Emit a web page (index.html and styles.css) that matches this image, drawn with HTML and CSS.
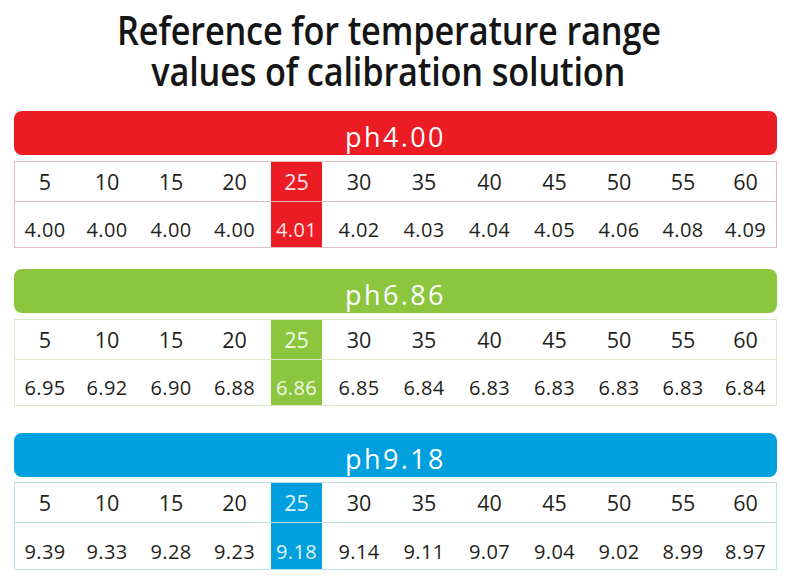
FILE: index.html
```html
<!DOCTYPE html>
<html>
<head>
<meta charset="utf-8">
<link rel="stylesheet" href="styles.css">
</head>
<body>
<div class="page">
  <h1 class="title"><span class="tl">Reference for temperature range</span><span class="tl">values of calibration solution</span></h1>

  <section class="sec red">
    <div class="bar">ph4.00</div>
    <div class="grid">
      <div class="c t">5</div><div class="c t">10</div><div class="c t">15</div><div class="c t">20</div><div class="c t hl"><span class="box">25</span></div><div class="c t">30</div><div class="c t">35</div><div class="c t">40</div><div class="c t">45</div><div class="c t">50</div><div class="c t">55</div><div class="c t">60</div>
      <div class="c v">4.00</div><div class="c v">4.00</div><div class="c v">4.00</div><div class="c v">4.00</div><div class="c v hl"><span class="box">4.01</span></div><div class="c v">4.02</div><div class="c v">4.03</div><div class="c v">4.04</div><div class="c v">4.05</div><div class="c v">4.06</div><div class="c v">4.08</div><div class="c v">4.09</div>
    </div>
  </section>

  <section class="sec green">
    <div class="bar">ph6.86</div>
    <div class="grid">
      <div class="c t">5</div><div class="c t">10</div><div class="c t">15</div><div class="c t">20</div><div class="c t hl"><span class="box">25</span></div><div class="c t">30</div><div class="c t">35</div><div class="c t">40</div><div class="c t">45</div><div class="c t">50</div><div class="c t">55</div><div class="c t">60</div>
      <div class="c v">6.95</div><div class="c v">6.92</div><div class="c v">6.90</div><div class="c v">6.88</div><div class="c v hl"><span class="box">6.86</span></div><div class="c v">6.85</div><div class="c v">6.84</div><div class="c v">6.83</div><div class="c v">6.83</div><div class="c v">6.83</div><div class="c v">6.83</div><div class="c v">6.84</div>
    </div>
  </section>

  <section class="sec blue">
    <div class="bar">ph9.18</div>
    <div class="grid">
      <div class="c t">5</div><div class="c t">10</div><div class="c t">15</div><div class="c t">20</div><div class="c t hl"><span class="box">25</span></div><div class="c t">30</div><div class="c t">35</div><div class="c t">40</div><div class="c t">45</div><div class="c t">50</div><div class="c t">55</div><div class="c t">60</div>
      <div class="c v">9.39</div><div class="c v">9.33</div><div class="c v">9.28</div><div class="c v">9.23</div><div class="c v hl"><span class="box">9.18</span></div><div class="c v">9.14</div><div class="c v">9.11</div><div class="c v">9.07</div><div class="c v">9.04</div><div class="c v">9.02</div><div class="c v">8.99</div><div class="c v">8.97</div>
    </div>
  </section>
</div>
</body>
</html>
```
FILE: styles.css
```css
* { box-sizing: border-box; }
html, body { margin: 0; padding: 0; background: #fff; }
body { width: 790px; height: 585px; overflow: hidden; }

.page {
  padding: 0 13px 0 14px;
  font-family: "Open Sans", "Noto Sans", sans-serif;
  color: #231f20;
}

.title {
  margin: 0;
  padding: 9px 14px 0 0;
  height: 111px;
  display: flex;
  flex-direction: column;
  align-items: center;
  font-family: "Open Sans", sans-serif;
  font-weight: 600;
  font-size: 39px;
  line-height: 41px;
  letter-spacing: -0.2px;
  color: #151515;
}
.tl {
  display: block;
  white-space: nowrap;
  transform: scaleX(0.88);
  transform-origin: center;
}

.sec { margin-bottom: 21px; }
.sec.blue { margin-top: 27px; }

.bar {
  height: 44px;
  border-radius: 8px;
  color: #fff;
  text-align: center;
  font-size: 27px;
  letter-spacing: 2.4px;
  line-height: 44px;
  padding-top: 4px;
  margin-bottom: 6px;
}
.blue .bar { margin-bottom: 5px; }

.grid {
  display: grid;
  grid-template-columns: 60px 64px 64px 63px 61px 64px 66px 65px 65px 64px 64px 1fr;
  grid-template-rows: 39px 46px;
  border: 1px solid #e6bcc0;
}
.blue .grid { grid-template-rows: 39px 47px; }

.c {
  display: flex;
  justify-content: center;
  align-items: center;
  font-size: 21px;
  line-height: 24px;
}
.c.t { font-size: 21.5px; }
.c.v { border-top: 1px solid #e6bcc0; padding-top: 11px; font-size: 20px; letter-spacing: 0.3px; }
.c.hl { align-items: stretch; }
.c.v.hl { padding-top: 0; }
.box {
  width: 51px;
  display: flex;
  align-items: center;
  justify-content: center;
  color: rgba(255,255,255,0.9);
}
.c.v.hl .box { padding-top: 11px; }

.red .bar, .red .box { background: #ec1c24; }
.red .grid, .red .c.v { border-color: #e6bcc0; }
.green .bar, .green .box { background: #8cc63f; }
.green .grid, .green .c.v { border-color: #dde8c8; }
.blue .bar, .blue .box { background: #00a0df; }
.blue .grid, .blue .c.v { border-color: #bfdfec; }
```
